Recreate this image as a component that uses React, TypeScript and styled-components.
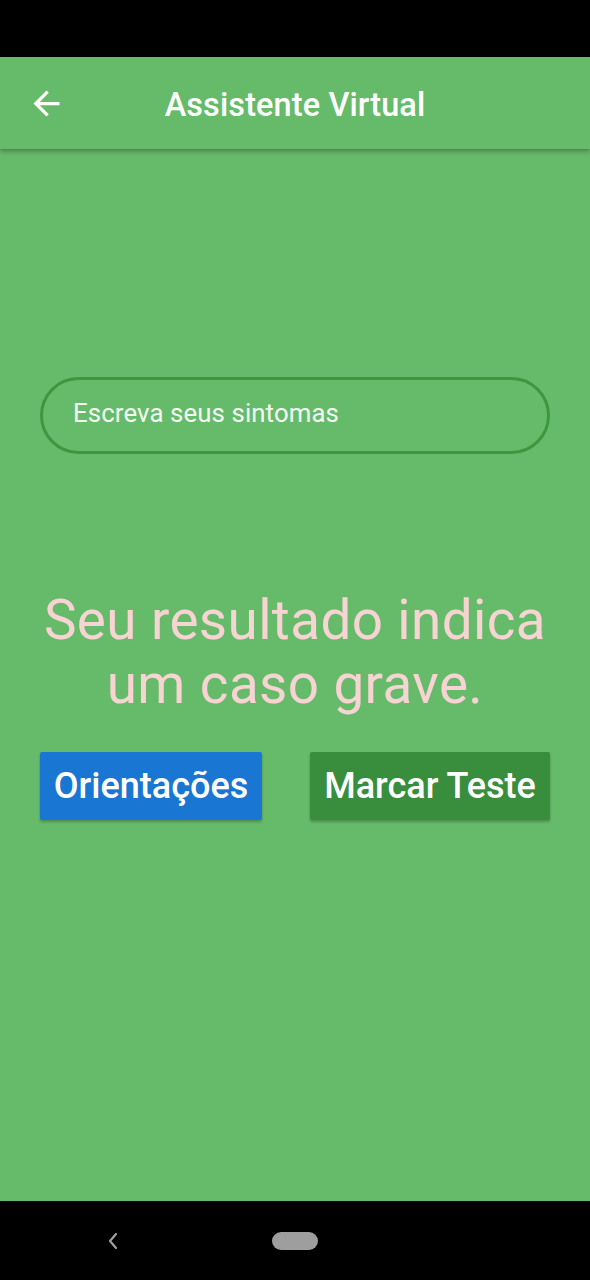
import React from "react";
import styled, { createGlobalStyle } from "styled-components";

const Global = createGlobalStyle`
  html, body { margin: 0; padding: 0; background: #000; }
  body { font-family: Roboto, "Noto Sans", Arial, sans-serif; }
  * { box-sizing: border-box; }
`;

const Screen = styled.div`
  width: 590px;
  height: 1280px;
  display: flex;
  flex-direction: column;
  background: #000;
  overflow: hidden;
`;

const StatusBar = styled.div`
  height: 57px;
  background: #000;
  flex: none;
`;

const AppBar = styled.header`
  height: 92px;
  flex: none;
  background: #66bb6a;
  display: grid;
  grid-template-columns: 40px 1fr 40px;
  align-items: center;
  padding: 0 26px;
  position: relative;
  z-index: 1;
  box-shadow: 0 3px 5px rgba(0, 0, 0, 0.22), 0 1px 2px rgba(0, 0, 0, 0.12);
`;

const BackButton = styled.button`
  width: 40px;
  height: 40px;
  border: none;
  background: transparent;
  padding: 0;
  display: flex;
  align-items: center;
  justify-content: center;
  color: #fff;
`;

const Title = styled.h1`
  margin: 0;
  padding-top: 4px;
  text-align: center;
  color: #fff;
  font-family: Roboto, sans-serif;
  font-weight: 500;
  font-size: 32.5px;
  letter-spacing: 0.1px;
`;

const Body = styled.main`
  flex: 1;
  background: #66bb6a;
  display: flex;
  flex-direction: column;
  padding: 228px 40px 0;
`;

const InputPill = styled.div`
  height: 77px;
  border: 3px solid #3e963f;
  border-radius: 40px;
  display: flex;
  align-items: center;
  padding: 0 30px 5px;
`;

const Placeholder = styled.span`
  color: #f4fbf4;
  font-family: Roboto, sans-serif;
  font-size: 25.8px;
  letter-spacing: 0.1px;
`;

const Result = styled.p`
  margin: 134px -20px 0;
  text-align: center;
  color: #f8d3d3;
  font-family: Roboto, sans-serif;
  font-size: 54.8px;
  line-height: 64px;
  letter-spacing: 0.4px;
`;

const Buttons = styled.div`
  display: flex;
  justify-content: space-between;
  margin-top: 36px;
`;

const ActionButton = styled.button<{ $bg: string; $w: number }>`
  width: ${(p) => p.$w}px;
  height: 68px;
  border: none;
  border-radius: 2px;
  background: ${(p) => p.$bg};
  color: #fff;
  font-family: Roboto, sans-serif;
  font-weight: 500;
  font-size: 36px;
  padding: 0;
  box-shadow: 0 2px 3px rgba(0, 0, 0, 0.25);
`;

const NavBar = styled.nav`
  height: 79px;
  flex: none;
  background: #000;
  display: flex;
  align-items: center;
  justify-content: center;
  position: relative;
`;

const NavBack = styled.div`
  position: absolute;
  left: 104px;
  top: 30px;
  color: #a0a0a0;
`;

const HomePill = styled.div`
  width: 46px;
  height: 18px;
  border-radius: 9px;
  background: #9e9e9e;
`;

export default function App() {
  return (
    <Screen>
      <Global />
      <StatusBar />
      <AppBar>
        <BackButton aria-label="Voltar">
          <svg width="39" height="39" viewBox="0 0 24 24" fill="#fff">
            <path d="M20 11H7.83l5.59-5.59L12 4l-8 8 8 8 1.41-1.41L7.83 13H20v-2z" />
          </svg>
        </BackButton>
        <Title>Assistente Virtual</Title>
        <span />
      </AppBar>
      <Body>
        <InputPill>
          <Placeholder>Escreva seus sintomas</Placeholder>
        </InputPill>
        <Result>
          Seu resultado indica
          <br />
          um caso grave.
        </Result>
        <Buttons>
          <ActionButton $bg="#1976d2" $w={222}>Orientações</ActionButton>
          <ActionButton $bg="#388e3c" $w={240}>Marcar Teste</ActionButton>
        </Buttons>
      </Body>
      <NavBar>
        <NavBack>
          <svg width="18" height="20" viewBox="0 0 18 20" fill="none" stroke="#a0a0a0" strokeWidth="2.2" strokeLinecap="round" strokeLinejoin="round">
            <path d="M12 3L6 10l6 7" />
          </svg>
        </NavBack>
        <HomePill />
      </NavBar>
    </Screen>
  );
}
